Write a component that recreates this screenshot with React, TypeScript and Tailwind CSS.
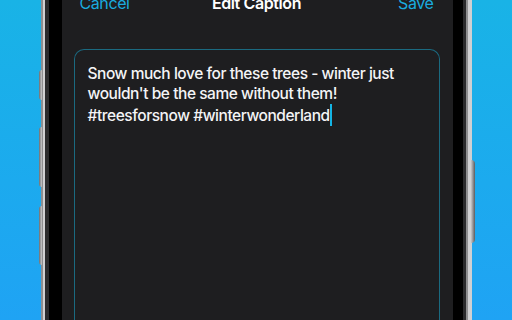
export default function App() {
  return (
    <div className="w-[512px] h-[320px] overflow-hidden flex justify-center bg-gradient-to-b from-[#19b3e6] to-[#1fa3f4] font-['Inter',sans-serif]">
      <div className="relative flex h-full w-[431px]">
        {/* side buttons */}
        <div className="absolute left-[-2px] top-[70px] w-[3px] h-[30px] rounded-l-sm bg-gradient-to-r from-[#6d6d6f] to-[#c9c9cb]" />
        <div className="absolute left-[-2px] top-[127px] w-[3px] h-[60px] rounded-l-sm bg-gradient-to-r from-[#6d6d6f] to-[#c9c9cb]" />
        <div className="absolute left-[-2px] top-[206px] w-[3px] h-[59px] rounded-l-sm bg-gradient-to-r from-[#6d6d6f] to-[#c9c9cb]" />
        <div className="absolute right-[-3px] top-[160px] w-[4px] h-[83px] rounded-r-sm bg-gradient-to-r from-[#c9c9cb] to-[#5d5d5f]" />

        {/* left frame */}
        <div className="w-[2px] bg-[#8e8e90]" />
        <div className="w-[2px] bg-[#d0d0d2]" />
        <div className="w-[4px] bg-[#2a2a2c]" />
        <div className="w-[13px] bg-black" />

        {/* screen */}
        <div className="w-[391px] h-full bg-[#1e1e20] flex flex-col">
          <div className="mt-[-8px] grid grid-cols-[1fr_auto_1fr] items-center pl-[18px] pr-[19px] h-[22px] text-[16px] leading-[22px] tracking-[-0.4px]">
            <span className="text-[#1aabdf]">Cancel</span>
            <span className="text-white font-semibold">Edit Caption</span>
            <span className="text-[#1aabdf] text-right">Save</span>
          </div>
          <div className="mt-[35px] ml-[12px] mr-[13px] flex-1 rounded-t-[10px] border border-b-0 border-[#1b6a80] px-[13px] pt-[14px]">
            <p className="text-[15.5px] leading-[20px] tracking-[-0.45px] text-[#f4f4f6] font-[450]">
              Snow much love for these trees - winter just wouldn't be the same without them! #treesforsnow #winterwonderland
              <span className="inline-block w-[2px] h-[22px] align-[-5px] bg-[#14b4e4]" />
            </p>
          </div>
        </div>

        {/* right frame */}
        <div className="w-[10px] bg-black" />
        <div className="w-[3px] bg-[#2a2a2c]" />
        <div className="w-[2px] bg-[#8e8e90]" />
        <div className="w-[4px] bg-[#d0d0d2]" />
      </div>
    </div>
  )
}
